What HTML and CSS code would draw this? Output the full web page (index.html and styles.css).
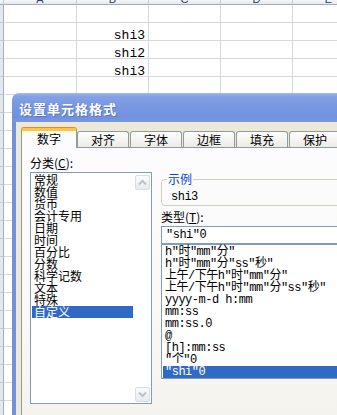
FILE: index.html
```html
<!DOCTYPE html>
<html lang="zh-CN">
<head>
    <meta charset="UTF-8">
    <title>设置单元格格式</title>
    <link rel="stylesheet" href="styles.css">
</head>
<body>
    <!-- Planilha ao fundo -->
    <div class="sheet">
        <div class="hd rh-hd"></div>
        <div class="hd"><span>A</span></div>
        <div class="hd"><span>B</span></div>
        <div class="hd"><span>C</span></div>
        <div class="hd"><span>D</span></div>
        <div class="hd"><span>E</span></div>

        <div class="rh"></div><div class="c"></div><div class="c"></div><div class="c"></div><div class="c"></div><div class="c"></div>
        <div class="rh"></div><div class="c"></div><div class="c">shi3</div><div class="c"></div><div class="c"></div><div class="c"></div>
        <div class="rh"></div><div class="c"></div><div class="c">shi2</div><div class="c"></div><div class="c"></div><div class="c"></div>
        <div class="rh"></div><div class="c"></div><div class="c">shi3</div><div class="c"></div><div class="c"></div><div class="c"></div>
        <div class="rh"></div><div class="c"></div><div class="c"></div><div class="c"></div><div class="c"></div><div class="c"></div>
        <div class="rh"></div><div class="c"></div><div class="c"></div><div class="c"></div><div class="c"></div><div class="c"></div>
        <div class="rh"></div><div class="c"></div><div class="c"></div><div class="c"></div><div class="c"></div><div class="c"></div>
        <div class="rh"></div><div class="c"></div><div class="c"></div><div class="c"></div><div class="c"></div><div class="c"></div>
        <div class="rh"></div><div class="c"></div><div class="c"></div><div class="c"></div><div class="c"></div><div class="c"></div>
        <div class="rh"></div><div class="c"></div><div class="c"></div><div class="c"></div><div class="c"></div><div class="c"></div>
        <div class="rh"></div><div class="c"></div><div class="c"></div><div class="c"></div><div class="c"></div><div class="c"></div>
        <div class="rh"></div><div class="c"></div><div class="c"></div><div class="c"></div><div class="c"></div><div class="c"></div>
        <div class="rh"></div><div class="c"></div><div class="c"></div><div class="c"></div><div class="c"></div><div class="c"></div>
        <div class="rh"></div><div class="c"></div><div class="c"></div><div class="c"></div><div class="c"></div><div class="c"></div>
        <div class="rh"></div><div class="c"></div><div class="c"></div><div class="c"></div><div class="c"></div><div class="c"></div>
        <div class="rh"></div><div class="c"></div><div class="c"></div><div class="c"></div><div class="c"></div><div class="c"></div>
        <div class="rh"></div><div class="c"></div><div class="c"></div><div class="c"></div><div class="c"></div><div class="c"></div>
        <div class="rh"></div><div class="c"></div><div class="c"></div><div class="c"></div><div class="c"></div><div class="c"></div>
        <div class="rh"></div><div class="c"></div><div class="c"></div><div class="c"></div><div class="c"></div><div class="c"></div>
        <div class="rh"></div><div class="c"></div><div class="c"></div><div class="c"></div><div class="c"></div><div class="c"></div>
        <div class="rh"></div><div class="c"></div><div class="c"></div><div class="c"></div><div class="c"></div><div class="c"></div>
        <div class="rh"></div><div class="c"></div><div class="c"></div><div class="c"></div><div class="c"></div><div class="c"></div>
        <div class="rh"></div><div class="c"></div><div class="c"></div><div class="c"></div><div class="c"></div><div class="c"></div>
    </div>

    <!-- Janela de diálogo -->
    <div class="dialog">
        <div class="titlebar">设置单元格格式</div>
        <div class="dlg-body">
            <div class="tabs">
                <div class="tab active">数字</div>
                <div class="tab first">对齐</div>
                <div class="tab">字体</div>
                <div class="tab">边框</div>
                <div class="tab">填充</div>
                <div class="tab">保护</div>
            </div>
            <div class="panel">
                <div class="col-left">
                    <div class="label">分类(<u>C</u>):</div>
                    <div class="listbox">
                        <ul class="cat-list">
                            <li>常规</li>
                            <li>数值</li>
                            <li>货币</li>
                            <li>会计专用</li>
                            <li>日期</li>
                            <li>时间</li>
                            <li>百分比</li>
                            <li>分数</li>
                            <li>科学记数</li>
                            <li>文本</li>
                            <li>特殊</li>
                            <li class="sel">自定义</li>
                        </ul>
                        <div class="vscroll">
                            <span class="sbtn">
                                <svg width="13" height="13" viewBox="0 0 13 13"><polyline points="3,8.5 6.5,5 10,8.5" fill="none" stroke="#bcc2cc" stroke-width="2"/></svg>
                            </span>
                            <span class="sbtn">
                                <svg width="13" height="13" viewBox="0 0 13 13"><polyline points="3,4.5 6.5,8 10,4.5" fill="none" stroke="#bcc2cc" stroke-width="2"/></svg>
                            </span>
                        </div>
                    </div>
                </div>
                <div class="col-right">
                    <fieldset class="sample">
                        <legend>示例</legend>
                        <div class="sample-text">shi3</div>
                    </fieldset>
                    <div class="label type-label">类型(<u>T</u>):</div>
                    <div class="type-input">"shi"0</div>
                    <ul class="type-list">
                        <li>h"时"mm"分"</li>
                        <li>h"时"mm"分"ss"秒"</li>
                        <li>上午/下午h"时"mm"分"</li>
                        <li>上午/下午h"时"mm"分"ss"秒"</li>
                        <li>yyyy-m-d h:mm</li>
                        <li>mm:ss</li>
                        <li>mm:ss.0</li>
                        <li>@</li>
                        <li>[h]:mm:ss</li>
                        <li>"个"0</li>
                        <li class="sel">"shi"0</li>
                    </ul>
                </div>
            </div>
        </div>
    </div>
</body>
</html>
```

FILE: styles.css
```css
* {
    box-sizing: border-box;
}
body {
    margin: 0;
    width: 337px;
    height: 415px;
    overflow: hidden;
    position: relative;
    background: #fff;
    font-family: "Liberation Mono", "Noto Sans CJK SC", monospace;
    color: #000;
}
ul {
    list-style: none;
    margin: 0;
    padding: 0;
}

/* planilha */
.sheet {
    display: grid;
    grid-template-columns: 4px 73px 72px 72px 72px 72px;
    grid-template-rows: 5px;
    grid-auto-rows: 18px;
}
.hd {
    background: linear-gradient(#f7f8fa, #e3e7ed);
    border-right: 1px solid #c5cbd3;
    border-bottom: 1px solid #9fb0c4;
    overflow: hidden;
    display: flex;
    justify-content: center;
    align-items: flex-end;
    font: 11px "Liberation Sans", sans-serif;
    color: #27415f;
}
.hd span {
    line-height: 11px;
    margin-bottom: -1px;
}
.rh {
    background: #e4e8ee;
    border-right: 1px solid #9fb0c4;
    border-bottom: 1px solid #c5cbd3;
}
.c {
    border-right: 1px solid #d4d8de;
    border-bottom: 1px solid #d4d8de;
    text-align: right;
    padding: 4px 3px 0 0;
    font-size: 13px;
    line-height: 17px;
    overflow: hidden;
}

/* janela */
.dialog {
    position: absolute;
    left: 12px;
    top: 93px;
    width: 370px;
    height: 340px;
    display: flex;
    flex-direction: column;
}
.titlebar {
    height: 29px;
    flex-shrink: 0;
    border-radius: 7px 7px 0 0;
    background: linear-gradient(#a4bbef 0, #85a2e6 3px, #7898e2 40%, #7292de 85%, #7a98e0 100%);
    color: #fff;
    font: bold 13px "Noto Sans CJK SC", sans-serif;
    letter-spacing: 1px;
    line-height: 27px;
    padding: 2px 0 0 7px;
    text-shadow: 1px 1px 0 #5a77c4;
}
.dlg-body {
    flex: 1;
    border-left: 4px solid #7591dc;
    background: #ece9d8;
    padding: 6px 0 0 5px;
}

/* abas */
.tabs {
    display: flex;
    align-items: flex-end;
    height: 20px;
    margin-bottom: -1px;
    position: relative;
    z-index: 1;
    font: 12px "Noto Sans CJK SC", sans-serif;
}
.tab {
    width: 52px;
    height: 16px;
    margin: 0 0 1px 1px;
    border: 1px solid #919b9c;
    border-bottom: none;
    border-radius: 3px 3px 0 0;
    background: linear-gradient(#fefefe, #ecebe6);
    text-align: center;
    line-height: 15px;
}
.tab.first {
    margin-left: 0;
}
.tab.active {
    width: 56px;
    height: 20px;
    margin: 0;
    border-top: 3px solid #ffc83c;
    box-shadow: inset 0 0 0 0 #fff, 0 -1px 0 #e68b2c;
    background: #fcfcfe;
    line-height: 16px;
}

.panel {
    height: 300px;
    border: 1px solid #919b9c;
    background: linear-gradient(#fcfcfe, #f9f8f4 60%, #f3f1ea);
    display: flex;
    padding: 8px 0 0 8px;
    font: 12px "Noto Sans CJK SC", sans-serif;
}
.label {
    line-height: 14px;
    height: 14px;
}

/* coluna esquerda */
.col-left {
    width: 122px;
    flex-shrink: 0;
}
.listbox {
    margin-top: 2px;
    height: 232px;
    border: 1px solid #7f9db9;
    background: #fff;
    display: flex;
}
.cat-list {
    flex: 1;
    padding-top: 1px;
}
.cat-list li {
    margin: 0 1px;
    padding-left: 2px;
    line-height: 12px;
    height: 12px;
}
.sel {
    background: #316ac5;
    color: #fff;
}
.vscroll {
    width: 17px;
    display: flex;
    flex-direction: column;
    justify-content: space-between;
    padding: 2px 1px 1px 1px;
}
.sbtn {
    width: 15px;
    height: 15px;
    border: 1px solid #dadde3;
    border-radius: 2px;
    background: linear-gradient(#fbfbfc, #e9eaee);
    display: flex;
    align-items: center;
    justify-content: center;
}

/* coluna direita */
.col-right {
    flex: 1;
    margin-left: 9px;
    padding-top: 16px;
}
.sample {
    margin: 0;
    padding: 0 0 1px 5px;
    border: 1px solid #d0d0bf;
    border-radius: 4px;
    min-width: 0;
}
.sample legend {
    padding: 0 1px;
    color: #0046d5;
    line-height: 14px;
}
.sample-text {
    margin-top: 4px;
    padding-left: 4px;
    font-family: "Liberation Mono", monospace;
    letter-spacing: -0.5px;
    line-height: 14px;
}
.type-label {
    margin-top: 4px;
}
.type-input {
    margin-top: 2px;
    height: 18px;
    border: 1px solid #7f9db9;
    background: #fff;
    padding-left: 4px;
    line-height: 16px;
    font-family: "Liberation Mono", "Noto Sans CJK SC", monospace;
    letter-spacing: -0.5px;
}
.type-list {
    height: 135px;
    border: 1px solid #7f9db9;
    background: #fff;
    padding-top: 1px;
    font-family: "Liberation Mono", "Noto Sans CJK SC", monospace;
    letter-spacing: -0.5px;
}
.type-list li {
    margin: 0 0 0 1px;
    padding-left: 2px;
    height: 12px;
    line-height: 12px;
    white-space: nowrap;
}
```
